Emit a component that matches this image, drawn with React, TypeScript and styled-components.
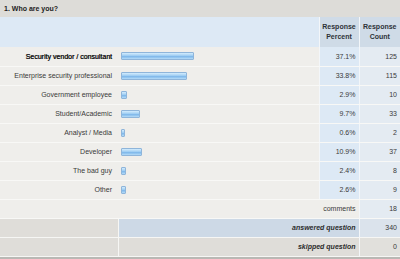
import React from 'react';
import styled, { createGlobalStyle } from 'styled-components';

const GlobalStyle = createGlobalStyle`
    html, body {
        margin: 0;
        padding: 0;
        background: #f0efec;
    }
`;

const Panel = styled.div`
    width: 400px;
    height: 259px;
    background: #efeeeb;
    font-family: "Liberation Sans", Arial, Helvetica, sans-serif;
    font-size: 7px;
    color: #333;
    overflow: hidden;
    border-bottom: 2px solid #b9b8b4;
    box-sizing: border-box;
`;

const QuestionBar = styled.div`
    height: 17px;
    display: flex;
    align-items: center;
    padding-left: 4px;
    background: #dddcd8;
    font-weight: bold;
    font-size: 7px;
    color: #222;
`;

const Table = styled.table`
    width: 400px;
    table-layout: fixed;
    border-collapse: collapse;
`;

const HeadCell = styled.th<{ $blue?: boolean }>`
    height: 30px;
    padding: 0;
    font-weight: bold;
    line-height: 10px;
    text-align: center;
    color: #2d3238;
    background: ${p => (p.$blue ? '#cfdbe7' : '#dde9f5')};
    border-left: ${p => (p.$blue ? '1px solid #f3f6f9' : 'none')};
`;

const Row = styled.tr`
    height: 19px;
    td {
        border-bottom: 1px solid #f8f8f6;
    }
`;

const Label = styled.td<{ $strong?: boolean }>`
    padding: 0 6px 0 0;
    text-align: right;
    white-space: nowrap;
    color: ${p => (p.$strong ? '#111' : '#3a3a3a')};
    text-shadow: ${p => (p.$strong ? '0.3px 0 0 #111' : 'none')};
`;

const BarCell = styled.td`
    padding: 0 0 0 3px;
`;

const Bar = styled.div`
    height: 6px;
    min-width: 2px;
    border: 1px solid #8fb5da;
    border-radius: 1px;
    background: linear-gradient(#d3ecfd 0%, #9fcdf3 45%, #7fb8ea 60%, #b6dcf8 100%);
`;

const NumCell = styled.td<{ $tone?: 'pct' | 'count' | 'plain' }>`
    padding: 0 3px 0 0;
    text-align: right;
    color: #3a3a3a;
    border-left: 1px solid #f3f6f9;
    background: ${p =>
        p.$tone === 'pct' ? '#dde9f5' : p.$tone === 'count' ? '#e4ebf2' : 'transparent'};
`;

const SummaryRow = styled.tr<{ $answered?: boolean }>`
    height: 19px;
    td {
        border-bottom: 1px solid #f6f6f4;
        background: #dfddd9;
    }
    td.mid {
        background: ${p => (p.$answered ? '#cdd9e6' : '#dfddd9')};
    }
    td.cnt {
        background: ${p => (p.$answered ? '#dbe3ec' : '#e1e0dc')};
    }
`;

const SummaryLabel = styled.td`
    padding: 0 3px 0 0;
    text-align: right;
    font-weight: bold;
    font-style: italic;
    color: #2c2c2c;
    border-left: 1px solid #f6f6f4;
`;

const answers = [
    { label: 'Security vendor / consultant', pct: 37.1, count: 125, strong: true },
    { label: 'Enterprise security professional', pct: 33.8, count: 115 },
    { label: 'Government employee', pct: 2.9, count: 10 },
    { label: 'Student/Academic', pct: 9.7, count: 33 },
    { label: 'Analyst / Media', pct: 0.6, count: 2 },
    { label: 'Developer', pct: 10.9, count: 37 },
    { label: 'The bad guy', pct: 2.4, count: 8 },
    { label: 'Other', pct: 2.6, count: 9 },
];

const App: React.FC = () => {
    return (
        <>
            <GlobalStyle />
            <Panel>
                <QuestionBar>1. Who are you?</QuestionBar>
                <Table>
                    <colgroup>
                        <col style={{ width: 118 }} />
                        <col style={{ width: 201 }} />
                        <col style={{ width: 40 }} />
                        <col style={{ width: 41 }} />
                    </colgroup>
                    <thead>
                        <tr>
                            <HeadCell />
                            <HeadCell />
                            <HeadCell $blue>Response<br />Percent</HeadCell>
                            <HeadCell $blue>Response<br />Count</HeadCell>
                        </tr>
                    </thead>
                    <tbody>
                        {answers.map(a => (
                            <Row key={a.label}>
                                <Label $strong={a.strong}>{a.label}</Label>
                                <BarCell>
                                    <Bar style={{ width: Math.max(1, a.pct * 1.96 - 2) }} />
                                </BarCell>
                                <NumCell $tone="pct">{a.pct}%</NumCell>
                                <NumCell $tone="count">{a.count}</NumCell>
                            </Row>
                        ))}
                        <Row>
                            <Label />
                            <Label colSpan={2} style={{ paddingRight: 3 }}>comments</Label>
                            <NumCell $tone="count">18</NumCell>
                        </Row>
                        <SummaryRow $answered>
                            <td />
                            <SummaryLabel className="mid" colSpan={2}>answered question</SummaryLabel>
                            <NumCell className="cnt">340</NumCell>
                        </SummaryRow>
                        <SummaryRow>
                            <td />
                            <SummaryLabel className="mid" colSpan={2}>skipped question</SummaryLabel>
                            <NumCell className="cnt">0</NumCell>
                        </SummaryRow>
                    </tbody>
                </Table>
            </Panel>
        </>
    );
};

export default App;
